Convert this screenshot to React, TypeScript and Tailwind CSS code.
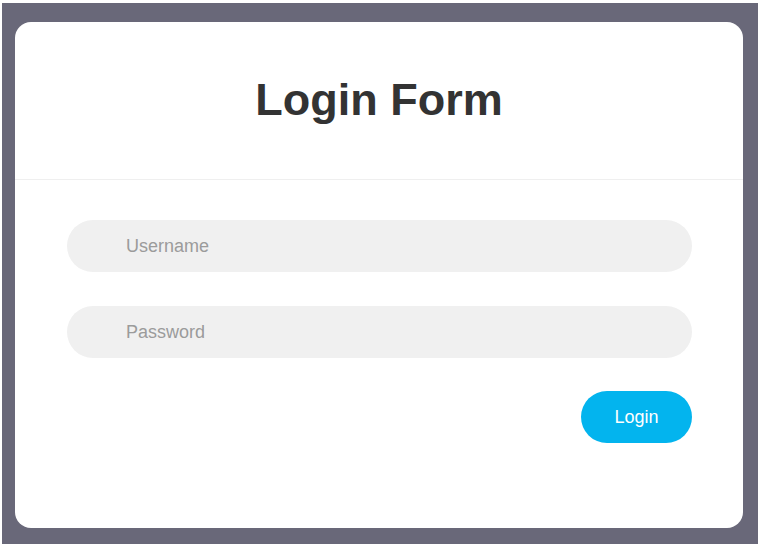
export default function App() {
  return (
    <div className="w-[766px] h-[553px] bg-white pt-[3px] pl-[2px]" style={{ fontFamily: '"Liberation Sans", Arial, sans-serif' }}>
      <div className="w-[756px] h-[541px] bg-[#696879] pl-[13px] pt-[19px]">
        <div className="w-[728px] h-[506px] bg-white rounded-[16px] flex flex-col">
          {/* header */}
          <div className="h-[158px] border-b border-[#efefef] flex items-center justify-center">
            <h1 className="text-[45px] font-bold text-[#333333] leading-none pb-[2px]">Login Form</h1>
          </div>

          {/* form */}
          <form className="flex flex-col px-[52px] pt-[40px] gap-[34px]" onSubmit={e => e.preventDefault()}>
            <input
              type="text"
              placeholder="Username"
              className="w-[625px] h-[52px] rounded-full bg-[#f0f0f0] pl-[59px] text-[18px] text-[#333] placeholder:text-[#9b9b9b] outline-none"
            />
            <input
              type="password"
              placeholder="Password"
              className="w-[625px] h-[52px] rounded-full bg-[#f0f0f0] pl-[59px] text-[18px] text-[#333] placeholder:text-[#9b9b9b] outline-none"
            />
            <div className="w-[625px] flex justify-end -mt-[1px]">
              <button
                type="submit"
                className="w-[111px] h-[52px] rounded-full bg-[#03b4ee] text-white text-[18px]"
              >
                Login
              </button>
            </div>
          </form>
        </div>
      </div>
    </div>
  );
}
